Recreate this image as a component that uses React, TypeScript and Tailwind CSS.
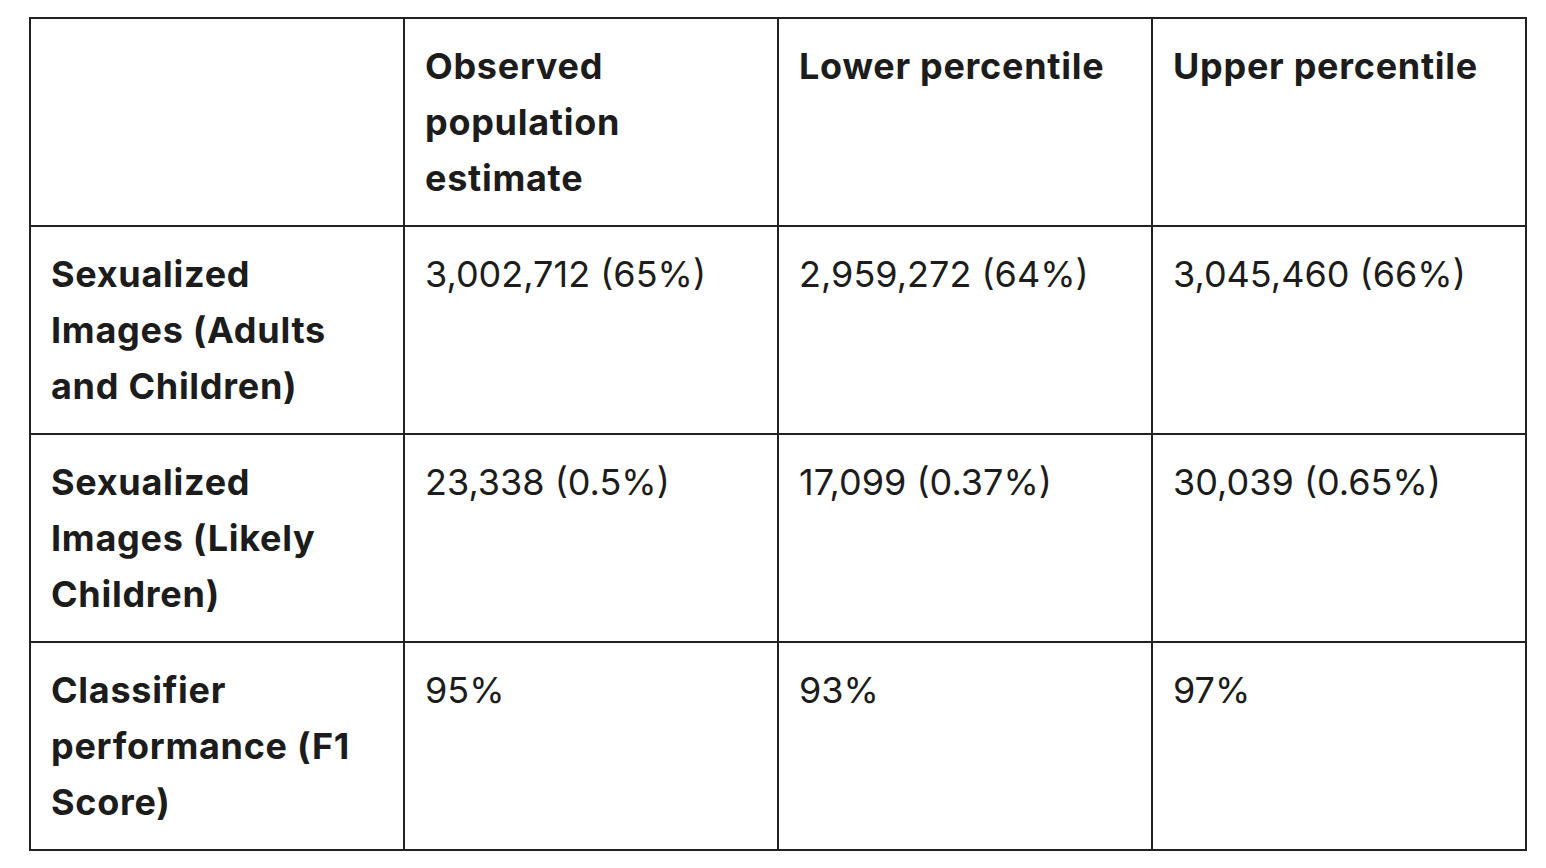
const header = [
  [],
  ["Observed", "population", "estimate"],
  ["Lower percentile"],
  ["Upper percentile"],
];

const rows = [
  {
    label: ["Sexualized", "Images (Adults", "and Children)"],
    values: ["3,002,712 (65%)", "2,959,272 (64%)", "3,045,460 (66%)"],
  },
  {
    label: ["Sexualized", "Images (Likely", "Children)"],
    values: ["23,338 (0.5%)", "17,099 (0.37%)", "30,039 (0.65%)"],
  },
  {
    label: ["Classifier", "performance (F1", "Score)"],
    values: ["95%", "93%", "97%"],
  },
];

function Cell({ lines, bold }: { lines: string[]; bold?: boolean }) {
  return (
    <div
      className={`h-[206px] bg-white px-[20px] pt-[19px] text-[36px] leading-[56px] text-[#1c1c1c] ${
        bold ? "font-bold tracking-[0.02em]" : "font-normal"
      }`}
    >
      {lines.map((l, i) => (
        <div key={i} className="whitespace-nowrap">
          {l}
        </div>
      ))}
    </div>
  );
}

export default function App() {
  return (
    <div
      className="min-h-screen bg-white pl-[29px] pt-[17px]"
      style={{ fontFamily: "Inter, 'Noto Sans', sans-serif" }}
    >
      <div className="grid w-[1498px] grid-cols-[372px_372px_372px_372px] gap-[2px] bg-[#222222] p-[2px]">
        {header.map((h, i) => (
          <Cell key={i} lines={h} bold />
        ))}
        {rows.map((r, i) => (
          <>
            <Cell key={`l${i}`} lines={r.label} bold />
            {r.values.map((v, j) => (
              <Cell key={`v${i}${j}`} lines={[v]} />
            ))}
          </>
        ))}
      </div>
    </div>
  );
}
